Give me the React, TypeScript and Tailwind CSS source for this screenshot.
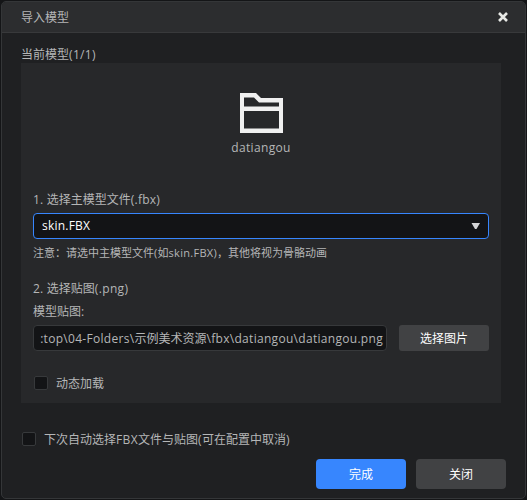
import type { ReactNode } from 'react';

// Latin run inside Chinese text
function L({ children, className = 'tracking-[0.22px]' }: { children: ReactNode; className?: string }) {
  return <span className={`font-['Open_Sans','Noto_Sans',sans-serif] ${className}`}>{children}</span>;
}

function CheckBox({ label }: { label: ReactNode }) {
  return (
    <label className="flex h-4 items-center">
      <span className="h-[14px] w-[14px] shrink-0 rounded-[2px] border border-[#37393b] bg-[#131416]" />
      <span className="ml-2 whitespace-nowrap">{label}</span>
    </label>
  );
}

export default function App() {
  return (
    <div className="h-[500px] w-[527px] overflow-hidden bg-[#141517] pl-px pt-px font-['Noto_Sans_CJK_SC',sans-serif] text-xs leading-4 text-[#b5b6b7]">
      <div className="flex h-[498px] w-[525px] flex-col overflow-hidden rounded-[5px] border border-[#343638] bg-[#1f2022]">
        <header className="flex h-[31px] shrink-0 items-center justify-between border-b border-[#38393b] bg-[#2c2d2f] pl-[19px] pr-[17px]">
          <span>导入模型</span>
          <svg className="-mt-px" width="10" height="10" viewBox="0 0 10 10" stroke="#e8e9e6" strokeWidth="2.6">
            <path d="M1 1L9 9M9 1L1 9" />
          </svg>
        </header>
        <main className="flex grow flex-col pl-[19px]">
          <div className="mt-[13px] h-4">当前模型<L className="tracking-[0.35px]">(1/1)</L></div>
          <section className="mt-px flex h-[340px] w-[480px] flex-col bg-[#27282a] px-3">
            <div className="flex flex-col items-center pt-[30px]">
              <svg width="43" height="40" viewBox="0 0 43 40" fill="#f0f0f0" fillRule="evenodd">
                <path d="M0 0H16L21 5H43V40H0ZM4 4.5V13.5H39V9.5H19L14 4.5ZM4 18V35.5H39V18Z" />
              </svg>
              <L className="mt-[7px] tracking-[0.35px]">datiangou</L>
            </div>
            <div className="mt-[35px] h-4"><L>1. </L>选择主模型文件<L>(.fbx)</L></div>
            <div className="mt-[6px] flex h-[26px] shrink-0 items-center justify-between rounded-[4px] border border-[#3786fe] bg-[#131416] pl-2 pr-2 text-white">
              <L>skin.FBX</L>
              <svg width="9" height="6" viewBox="0 0 9 6" fill="#d4d5d6"><path d="M0.5 0H9L5.5 6H4Z" /></svg>
            </div>
            <div className="mt-[5px] h-4 whitespace-nowrap text-[11px]">注意：请选中主模型文件<L className="tracking-[0.3px]">(</L>如<L className="tracking-[0.3px]">skin.FBX)</L>，其他将视为骨骼动画</div>
            <div className="mt-[20px] h-4"><L>2. </L>选择贴图<L className="tracking-[0.35px]">(.png)</L></div>
            <div className="mt-[7px] h-4">模型贴图<L>:</L></div>
            <div className="mt-[6px] flex h-[26px] shrink-0 gap-3">
              <div className="flex w-[354px] items-center justify-end overflow-hidden whitespace-nowrap rounded-[4px] border border-[#37393b] bg-[#131416] pr-[3px]">
                <span><L className="tracking-[0.3px]">:top\04-Folders\</L>示例美术资源<L className="tracking-[0.3px]">\fbx\datiangou\datiangou.png</L></span>
              </div>
              <button className="w-[90px] rounded-[3px] bg-[#414244] text-white">选择图片</button>
            </div>
            <div className="mt-[24px] pl-px"><CheckBox label="动态加载" /></div>
          </section>
          <div className="mt-[28px] pl-px"><CheckBox label={<>下次自动选择<L className="tracking-[0.4px]">FBX</L>文件与贴图<L className="tracking-[0.4px]">(</L>可在配置中取消<L>)</L></>} /></div>
          <div className="mt-[12px] flex h-[30px] justify-end gap-[10px] pr-[19px] text-white">
            <button className="w-[90px] rounded-[4px] bg-[#3786fe]">完成</button>
            <button className="w-[90px] rounded-[4px] bg-[#414244]">关闭</button>
          </div>
        </main>
      </div>
    </div>
  );
}
